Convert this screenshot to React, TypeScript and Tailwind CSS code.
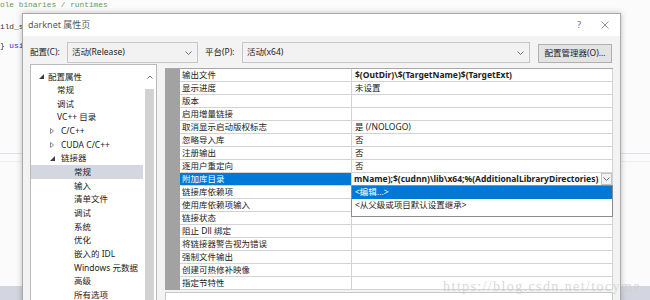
import React from 'react';

const UI = "font-['Noto_Sans','Noto_Sans_CJK_SC',sans-serif]";

interface TreeItem {
  label: string;
  indent: string;
  icon?: 'open' | 'closed';
  iconBox?: string;
  selected?: boolean;
}

const TREE: TreeItem[] = [
  { label: '配置属性', indent: 'pl-[8px]', icon: 'open', iconBox: 'w-[9px]' },
  { label: '常规', indent: 'pl-[26px]' },
  { label: '调试', indent: 'pl-[26px]' },
  { label: 'VC++ 目录', indent: 'pl-[26px]' },
  { label: 'C/C++', indent: 'pl-[19px]', icon: 'closed', iconBox: 'w-[11px]' },
  { label: 'CUDA C/C++', indent: 'pl-[19px]', icon: 'closed', iconBox: 'w-[11px]' },
  { label: '链接器', indent: 'pl-[19px]', icon: 'open', iconBox: 'w-[11px]' },
  { label: '常规', indent: 'pl-[43px]', selected: true },
  { label: '输入', indent: 'pl-[43px]' },
  { label: '清单文件', indent: 'pl-[43px]' },
  { label: '调试', indent: 'pl-[43px]' },
  { label: '系统', indent: 'pl-[43px]' },
  { label: '优化', indent: 'pl-[43px]' },
  { label: '嵌入的 IDL', indent: 'pl-[43px]' },
  { label: 'Windows 元数据', indent: 'pl-[43px]' },
  { label: '高级', indent: 'pl-[43px]' },
  { label: '所有选项', indent: 'pl-[43px]' },
];

interface Prop {
  name: string;
  value?: string;
  bold?: boolean;
  selected?: boolean;
}

const PROPS: Prop[] = [
  { name: '输出文件', value: '$(OutDir)\\$(TargetName)$(TargetExt)', bold: true },
  { name: '显示进度', value: '未设置' },
  { name: '版本' },
  { name: '启用增量链接' },
  { name: '取消显示启动版权标志', value: '是 (/NOLOGO)' },
  { name: '忽略导入库', value: '否' },
  { name: '注册输出', value: '否' },
  { name: '逐用户重定向', value: '否' },
  { name: '附加库目录', selected: true },
  { name: '链接库依赖项' },
  { name: '使用库依赖项输入' },
  { name: '链接状态' },
  { name: '阻止 Dll 绑定' },
  { name: '将链接器警告视为错误' },
  { name: '强制文件输出' },
  { name: '创建可热修补映像' },
  { name: '指定节特性' },
];

function Chevron({ className = '' }: { className?: string }) {
  return (
    <svg width="7" height="4" viewBox="0 0 7 4" className={className}>
      <polyline points="0.5,0.5 3.5,3.5 6.5,0.5" fill="none" stroke="#606060" strokeWidth="0.9" />
    </svg>
  );
}

function Expander({ kind }: { kind: 'open' | 'closed' }) {
  if (kind === 'open') {
    return (
      <svg width="5" height="5" viewBox="0 0 5 5">
        <polygon points="5,0 5,5 0,5" fill="#3c3c3c" />
      </svg>
    );
  }
  return (
    <svg width="4" height="6" viewBox="0 0 4 6">
      <polygon points="0.5,0.5 3.5,3 0.5,5.5" fill="none" stroke="#707070" strokeWidth="0.8" />
    </svg>
  );
}

function Combo({ text, width }: { text: string; width: string }) {
  return (
    <div className={`${width} h-[21px] flex items-center justify-between pl-[4px] pr-[5px] bg-[#f2f2f2] border border-[#c6c6c6] text-[8.5px] text-[#222]`}>
      <span>{text}</span>
      <Chevron />
    </div>
  );
}

export default function App() {
  return (
    <div className="relative w-[650px] h-[300px] overflow-hidden bg-[#fbfbfb]">
      {/* editor behind the dialog */}
      <div className="flex flex-col h-full font-['Liberation_Mono',monospace] text-[7.8px]">
        <div className="h-[10px] leading-[10px] text-[#6a9a5a] whitespace-nowrap">ole binaries / runtimes</div>
        <div className="mt-[12px] w-[22px] h-[10px] leading-[10px] text-[#333] whitespace-nowrap overflow-hidden">ild_s</div>
        <div className="mt-[9px] w-[22px] h-[10px] leading-[10px] text-[#333] whitespace-nowrap overflow-hidden">
          {'} '}<span className="text-[#2b2bd8]">usi</span>
        </div>
        <div className="mt-[102px] h-[1px] bg-[#e0e2e8]" />
        <div className="mt-[7px] h-[1px] bg-[#eceef2]" />
        <div className="flex-1" />
        <div className="h-[14px] bg-[#d3d6e1]" />
      </div>

      {/* property page dialog */}
      <div className={`absolute left-[22px] top-[13px] w-[599px] h-[300px] flex flex-col border border-[#a9a9a9] bg-[#f3f3f3] shadow-[0_0_6px_rgba(0,0,0,0.25)] ${UI}`}>
        <div className="h-[22px] bg-white flex items-center pl-[5px] pr-[11px]">
          <span className="text-[9px] text-[#5a5a5a]">darknet 属性页</span>
          <div className="ml-auto flex items-center gap-[20px]">
            <span className="text-[8.5px] text-[#666]">?</span>
            <svg width="8" height="8" viewBox="0 0 8 8">
              <path d="M0.5 0.5 L7.5 7.5 M7.5 0.5 L0.5 7.5" stroke="#777" strokeWidth="0.8" />
            </svg>
          </div>
        </div>

        {/* configuration row */}
        <div className="mt-[6px] h-[21px] flex items-center pl-[7px] text-[8.5px] text-[#222]">
          <span className="w-[37px]">配置(C):</span>
          <Combo text="活动(Release)" width="w-[131px]" />
          <span className="ml-[7px] w-[37px]">平台(P):</span>
          <Combo text="活动(x64)" width="w-[288px]" />
          <div className="ml-[8px] mt-[2px] w-[74px] h-[19px] flex items-center justify-center bg-[#e3e3e3] border border-[#b0b0b0]">
            配置管理器(O)...
          </div>
        </div>

        {/* main area */}
        <div className="mt-[1px] flex-1 flex pl-[7px] min-h-0">
          {/* tree */}
          <div className="w-[127px] h-full flex border border-[#b9b9b9] bg-white text-[8.5px] text-[#222]">
            <div className="w-[112px] pt-[5px] flex flex-col">
              {TREE.map((t, i) => (
                <div
                  key={i}
                  className={`h-[13.65px] shrink-0 flex items-center ${t.indent} ${t.selected ? 'bg-[#d5d7e0]' : ''}`}
                >
                  {t.icon && (
                    <span className={`${t.iconBox} flex items-center`}>
                      <Expander kind={t.icon} />
                    </span>
                  )}
                  <span className="whitespace-nowrap leading-none">{t.label}</span>
                </div>
              ))}
            </div>
            <div className="flex-1 flex flex-col items-center">
              <div className="h-[24px] flex items-center">
                <svg width="6" height="4" viewBox="0 0 6 4">
                  <polyline points="0.5,3.5 3,1 5.5,3.5" fill="none" stroke="#606060" strokeWidth="0.9" />
                </svg>
              </div>
              <div className="w-[9px] flex-1 bg-[#d2d2d2]" />
            </div>
          </div>

          {/* property grid */}
          <div className="ml-[8px] mt-[4px] w-[448px] flex flex-col">
            <div className="flex flex-col border-t border-[#a8a8a8] text-[8.5px] text-[#222]">
              {PROPS.map((p, i) => (
                <div key={i} className="h-[13px] flex">
                  <div className="w-[15px] bg-[#a2a2a2]" />
                  <div
                    className={`w-[172px] flex items-center pl-[2px] border-b border-r border-[#d3d3d3] whitespace-nowrap ${
                      p.selected ? 'bg-[#0078d7] text-white' : 'bg-white'
                    }`}
                  >
                    {p.name}
                  </div>
                  <div className="relative flex-1 flex items-center border-b border-r border-[#d3d3d3] bg-white">
                    {p.selected ? (
                      <>
                        <div className="flex-1 h-full flex items-center overflow-hidden pl-[2px] font-bold whitespace-nowrap">
                          mName);$(cudnn)\lib\x64;%(AdditionalLibraryDirectories)
                        </div>
                        <div className="w-[11px] h-full flex items-center justify-center border border-[#c3c3c3] bg-[#f2f2f2]">
                          <Chevron />
                        </div>
                        <div className="absolute left-[-1px] right-[-1px] top-full z-10 flex flex-col border border-[#8c8c8c] bg-white pb-[4px]">
                          <div className="h-[13px] flex items-center pl-[3px] bg-[#0078d7] text-white">&lt;编辑...&gt;</div>
                          <div className="h-[13px] flex items-center pl-[3px]">&lt;从父级或项目默认设置继承&gt;</div>
                        </div>
                      </>
                    ) : (
                      <span className={`pl-[3px] whitespace-nowrap ${p.bold ? 'font-bold' : ''}`}>{p.value}</span>
                    )}
                  </div>
                </div>
              ))}
            </div>
            <div className="mt-[2px] flex-1 bg-white border border-[#c8c8c8]" />
          </div>
        </div>
      </div>

      {/* watermark */}
      <div className="absolute left-[443px] top-[279px] font-['Liberation_Serif',serif] text-[14px] leading-[16px] tracking-[1.4px] text-[#cfcfcf] opacity-80 whitespace-nowrap">
        https://blog.csdn.net/tocyme
      </div>
    </div>
  );
}
